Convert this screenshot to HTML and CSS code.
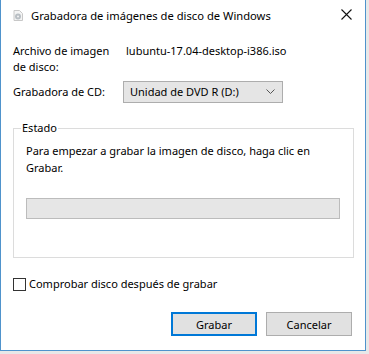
FILE: index.html
```html
<!DOCTYPE html>
<html lang="es">
<head>
  <meta charset="UTF-8">
  <title>Grabadora de imágenes de disco de Windows</title>
  <link rel="stylesheet" href="styles.css">
</head>
<body>
  <div class="window">
    <!-- Barra de título -->
    <div class="titlebar">
      <svg class="app-icon" width="10" height="11" viewBox="0 0 10 11">
        <path d="M1 0.5h5.5l3 3v7h-8.5z" fill="#f4f4f4" stroke="#c8c8c8"/>
        <circle cx="5" cy="6.5" r="3" fill="#b9bfc4"/>
        <circle cx="5" cy="6.5" r="1" fill="#f4f4f4"/>
      </svg>
      <span class="title">Grabadora de imágenes de disco de Windows</span>
      <svg class="close" width="11" height="11" viewBox="0 0 11 11">
        <path d="M0.5 0.5l10 10M10.5 0.5l-10 10" stroke="#111" stroke-width="1.1"/>
      </svg>
    </div>

    <div class="content">
      <div class="row">
        <div class="label">Archivo de imagen de disco:</div>
        <div class="value">lubuntu-17.04-desktop-i386.iso</div>
      </div>

      <div class="row row-drive">
        <div class="label">Grabadora de CD:</div>
        <div class="select">
          <span>Unidad de DVD R (D:)</span>
          <svg width="9" height="6" viewBox="0 0 9 6">
            <path d="M0.5 0.5l4 4 4-4" fill="none" stroke="#555"/>
          </svg>
        </div>
      </div>

      <fieldset class="status">
        <legend>Estado</legend>
        <p>Para empezar a grabar la imagen de disco, haga clic en Grabar.</p>
        <div class="progress"></div>
      </fieldset>

      <label class="check">
        <span class="box"></span>
        Comprobar disco después de grabar
      </label>

      <div class="buttons">
        <button class="btn default">Grabar</button>
        <button class="btn">Cancelar</button>
      </div>
    </div>
  </div>
</body>
</html>
```

FILE: styles.css
```css
html, body {
  margin: 0;
  padding: 0;
}
body {
  width: 369px;
  height: 354px;
  background: #e8e8e8;
  font-family: "Noto Sans", "Open Sans", sans-serif;
  font-size: 11px;
  color: #000;
  overflow: hidden;
}
.window {
  width: 364px;
  height: 350px;
  background: #fff;
  border: 1px solid #4f93cc;
  border-top: none;
}
.titlebar {
  height: 31px;
  display: flex;
  align-items: center;
  padding-left: 12px;
}
.app-icon {
  margin-right: 8px;
}
.title {
  flex: 1;
  font-size: 11.2px;
  margin-top: -1px;
}
.close {
  margin-right: 13px;
  margin-top: -2px;
}
.content {
  padding: 12px 12px 0 12px;
}
.row {
  display: grid;
  grid-template-columns: 113px auto;
  line-height: 16px;
}
.label {
  width: 106px;
}
.row-drive {
  margin-top: 6px;
  align-items: center;
}
.select {
  height: 20px;
  margin-left: -3px;
  border: 1px solid #adadad;
  background: #e5e5e5;
  display: flex;
  align-items: center;
  justify-content: space-between;
  padding: 0 7px 0 6px;
  width: 145px;
}
.status {
  margin: 18px 0 0 0;
  padding: 0 11px 38px 12px;
  border: 1px solid #dcdcdc;
  width: 316px;
}
.status legend {
  padding: 0 1px;
  margin-left: -5px;
  line-height: 14px;
}
.status p {
  margin: 7px 0 0 0;
  line-height: 17px;
  width: 300px;
}
.progress {
  margin-top: 22px;
  height: 19px;
  width: 312px;
  border: 1px solid #bcbcbc;
  background: #e6e6e6;
}
.check {
  display: flex;
  align-items: center;
  margin-top: 18px;
  line-height: 16px;
}
.box {
  width: 11px;
  height: 11px;
  border: 1px solid #333;
  margin-right: 3px;
}
.buttons {
  display: flex;
  justify-content: flex-end;
  gap: 9px;
  margin-top: 20px;
  padding-right: 1px;
}
.btn {
  width: 86px;
  height: 24px;
  border: 1px solid #adadad;
  background: #e1e1e1;
  font-family: inherit;
  font-size: 11px;
  padding: 0;
  color: #000;
}
.btn.default {
  border: 2px solid #0078d7;
}
```
